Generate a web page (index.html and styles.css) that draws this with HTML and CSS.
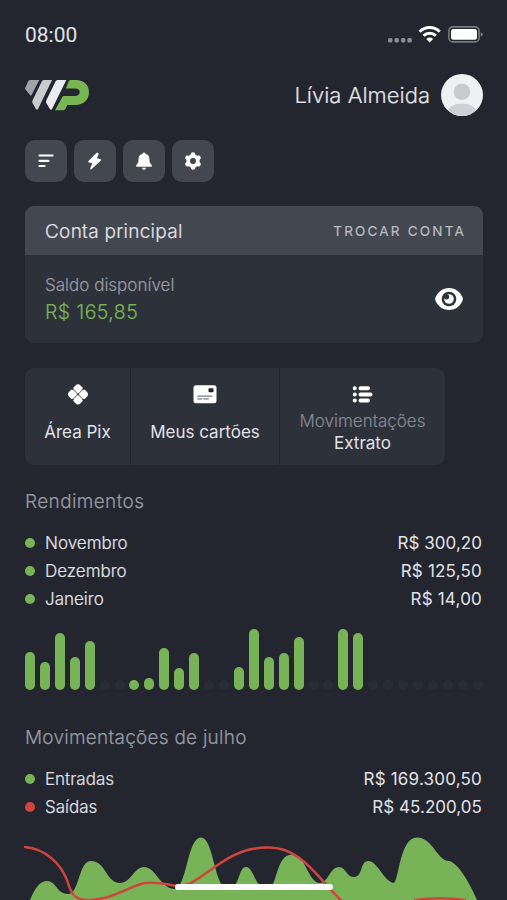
FILE: index.html
```
<!DOCTYPE html>
<html lang="pt-BR">
<head>
<meta charset="utf-8">
<title>Conta principal</title>
<link rel="stylesheet" href="styles.css">
</head>
<body>
<div class="screen">
  <div class="status">
    <span class="time">08:00</span>
    <svg class="status-icons" width="96" height="20" viewBox="0 0 96 20">
      <g fill="#8b8d94"><rect x="1" y="14" width="4.400" height="4.400" rx="1.500"/><rect x="7.500" y="14" width="4.400" height="4.400" rx="1.500"/><rect x="14" y="14" width="4.400" height="4.400" rx="1.500"/><rect x="20.400" y="14" width="4.400" height="4.400" rx="1.500"/></g>
      <g fill="none" stroke="#fff" stroke-width="3"><path d="M32.700 7.800a14 14 0 0 1 20 0"/><path d="M36.500 11.800a8.700 8.700 0 0 1 12.400 0"/></g>
      <path d="M39.300 14.900a4.800 4.800 0 0 1 6.800 0l-3.400 3.500z" fill="#fff"/>
      <rect x="61.900" y="2.900" width="30.200" height="15" rx="4" fill="none" stroke="#777980" stroke-width="1.600"/>
      <rect x="64" y="5" width="26" height="10.800" rx="2.300" fill="#fff"/>
      <path d="M93.700 8.200q2.200.7 2.200 2.200t-2.200 2.200z" fill="#777980"/>
    </svg>
  </div>

  <header class="header">
    <svg width="64" height="31" viewBox="0 0 65 31" preserveAspectRatio="none">
      <path d="M5 0h9.500L7 14.500Q6 16.500 5 15L.5 9.500Q-.2 8.600.3 7.500L3.500 1Q4 0 5 0z" fill="#a0a3a9"/>
      <path d="M19 0h8.500L13.500 28.500Q12.200 31 10.800 28.500L7.500 22.800Q7 21.700 7.600 20.500L17 1.500Q17.700 0 19 0z" fill="#c9ccce"/>
      <path d="M33 0h9L27.700 28.500Q26.400 31 25 28.500L21.500 22.800Q21 21.700 21.600 20.500L31 1.500Q31.700 0 33 0z" fill="#ebecf1"/>
      <path d="M46 0h6c8 0 13 5 13 12 0 8-6 13-13.500 13H43l-2 4Q40.300 30.300 39 30.300h-8.500l8-14.300H51c3.200 0 4.600-1.600 4.600-3.900S54 8.400 51 8.400H41.500L44.300 1.500Q45 0 46 0z" fill="#78b653"/>
    </svg>
    <div class="user">
      <span class="name">Lívia Almeida</span>
      <svg width="42" height="42" viewBox="0 0 42 42">
        <clipPath id="face"><circle cx="21" cy="21" r="21"/></clipPath>
        <g clip-path="url(#face)"><rect width="42" height="42" fill="#eef0f1"/><circle cx="21" cy="17.700" r="8.300" fill="#c7cbcd"/><ellipse cx="21" cy="40" rx="15" ry="10.500" fill="#cdd1d3"/></g>
      </svg>
    </div>
  </header>

  <nav class="tools">
    <button><svg width="18" height="18" viewBox="0 0 18 18"><path d="M2.500 3.500h13M2.500 8.800h9M2.500 14h5" fill="none" stroke="#fff" stroke-width="2.200" stroke-linecap="round"/></svg></button>
    <button><svg width="18" height="18" viewBox="0 0 18 18"><path d="M10.700.8L2.500 8.900Q1.600 10 3 10.500l3.300.8-2 4.900Q4 18 5.400 17.200l9.300-8.500Q15.600 7.600 14.200 7l-3.300-.8 1.700-4Q13 .2 10.700.8z" fill="#fff"/></svg></button>
    <button><svg width="18" height="18" viewBox="0 0 18 18"><path d="M9 .5Q10.200.5 10.500 1.700C13.700 2.600 14.500 5 14.500 8c0 2.500.9 3.700 2.200 5 .6.800.2 1.700-.8 1.700H2.100c-1 0-1.400-.9-.8-1.700C2.600 11.700 3.500 10.500 3.500 8c0-3 .8-5.400 4-6.300Q7.800.5 9 .5zM6.900 15.700h4.200Q10.800 17.800 9 17.800T6.900 15.700z" fill="#fff"/></svg></button>
    <button><svg width="18" height="18" viewBox="0 0 18 18"><circle cx="9" cy="9" r="4.700" fill="none" stroke="#fff" stroke-width="4"/><g stroke="#fff" stroke-width="4.600" stroke-linecap="round"><path d="M9 2.600v.8M9 14.600v.8M3.500 5.800l.7.400M13.800 11.800l.7.400M3.500 12.200l.7-.4M13.800 6.200l.7-.4"/></g><circle cx="9" cy="9" r="2.900" fill="#434750"/></svg></button>
  </nav>

  <section class="account">
    <div class="account-head"><span class="account-title">Conta principal</span><span class="switch">TROCAR CONTA</span></div>
    <div class="account-body">
      <div><div class="label">Saldo disponível</div><div class="balance">R$ 165,85</div></div>
      <svg width="28" height="22" viewBox="0 0 28 22"><path d="M14 0C20.500 0 25 4 27.500 9.300q.6 1.700 0 3.400C25 18 20.500 22 14 22S3 18 .5 12.700q-.6-1.700 0-3.400C3 4 7.500 0 14 0z" fill="#fff"/><circle cx="14" cy="11" r="7.300" fill="#2d313a"/><circle cx="14" cy="11" r="4.800" fill="#fff"/><circle cx="11.600" cy="8.800" r="2.600" fill="#2d313a"/></svg>
    </div>
  </section>

  <section class="shortcuts">
    <div class="shortcut pix">
      <svg width="22" height="22" viewBox="0 0 22 22"><g transform="rotate(45 11 10.300)"><rect x="3" y="2.300" width="16" height="16" rx="3.500" fill="#fff"/><path d="M11 2.300v16M3 10.300h16" stroke="#2d313a" stroke-width=".8"/><g fill="#2d313a"><circle cx="11" cy="2.300" r="1.200"/><circle cx="11" cy="18.300" r="1.200"/><circle cx="3" cy="10.300" r="1.200"/><circle cx="19" cy="10.300" r="1.200"/><circle cx="11" cy="10.300" r=".9"/></g></g></svg>
      <span class="bright">Área Pix</span>
    </div>
    <div class="shortcut cards">
      <svg width="24" height="22" viewBox="0 0 24 22"><rect x=".5" y="1.300" width="23" height="18" rx="2.500" fill="#fff"/><rect x="15.500" y="4.300" width="5" height="4" rx=".8" fill="#20232c"/><path d="M4.300 12.100h15M4.300 14.800h5M10.300 14.800h5.500" stroke="#777a80" stroke-width="1.300"/></svg>
      <span class="bright">Meus cartões</span>
    </div>
    <div class="shortcut extract">
      <svg width="22" height="22" viewBox="0 0 22 22"><g stroke="#fff" stroke-width="4" stroke-linecap="round"><path d="M2.700 4.200h.1M2.700 10.400h.1M2.700 16.600h.1M8.500 4.200h7.500M8.500 10.400h10M8.500 16.600h7.500"/></g></svg>
      <span class="muted">Movimentações</span>
      <span class="bright second">Extrato</span>
    </div>
  </section>

  <section class="income">
    <h2 class="h-income">Rendimentos</h2>
    <ul>
      <li><i></i><span class="item">Novembro</span><b class="wide">R$ 300,20</b></li>
      <li><i></i><span class="item">Dezembro</span><b>R$ 125,50</b></li>
      <li><i></i><span class="item">Janeiro</span><b>R$ 14,00</b></li>
    </ul>
    <div class="bars">
      <span style="height:38.5px"></span><span style="height:28.5px"></span><span style="height:57px"></span><span style="height:33.5px"></span><span style="height:49.5px"></span><span class="off"></span><span class="off"></span><span style="height:10px"></span><span style="height:12.5px"></span><span style="height:42px"></span><span style="height:22px"></span><span style="height:37px"></span><span class="off"></span><span class="off"></span><span style="height:23.5px"></span><span style="height:61.5px"></span><span style="height:33.5px"></span><span style="height:37px"></span><span style="height:53px"></span><span class="off"></span><span class="off"></span><span style="height:61.5px"></span><span style="height:57px"></span><span class="off"></span><span class="off"></span><span class="off"></span><span class="off"></span><span class="off"></span><span class="off"></span><span class="off"></span><span class="off"></span>
    </div>
  </section>

  <section class="flow">
    <h2 class="h-flow">Movimentações de julho</h2>
    <ul>
      <li><i></i><span class="item">Entradas</span><b>R$ 169.300,50</b></li>
      <li><i class="red"></i><span class="item">Saídas</span><b class="wide">R$ 45.200,05</b></li>
    </ul>
    <svg class="chart" width="460" height="65" viewBox="24 835 460 65">
      <path fill="#78b457" d="M30 900C35 888 40 881 47 881C56 881 57 894 68 894C80 894 78 861 91 861C106 861 106 883 120 883C131 883 134 867 144 867C156 867 160 888 174 889C187 889 187 837.500 201 837.500C214 837.500 214 889 228 889C240 889 238 867 246 867C254 867 255 889 267 889C278 889 275 854.500 292 854.500C306 854.500 308 883 320 883C328 883 330 867 339 867C346 867 346 877 354 877C363 877 360 861 368 861C378 861 383 881 394 883C399 879 400 837.500 417 837.500C433 837.500 437 861 449 861C459 863 471 886 477 900z"/>
      <path fill="none" stroke="#d0443f" stroke-width="2.500" stroke-linecap="round" d="M25 847C47 849 61 865 67 880C71 893 73 900 89 900C113 900 133 884 146 883C160 882 165 884 176 886C202 888 221 847 268 847.500C302 847 317 878 341 900M415 900Q440 896.500 465 900"/>
    </svg>
  </section>
  <div class="home-indicator"></div>
</div>
</body>
</html>
```
FILE: styles.css
```
* { box-sizing: border-box; }
body { margin: 0; background: #23262f; color: #e1e2e7; font-family: Inter, "Liberation Sans", sans-serif; font-weight: 300; }
svg { display: block; flex: none; }
h2, ul { margin: 0; padding: 0; }
.name, .account-title, .label, .balance, .muted, h2, .item { -webkit-text-stroke: .2px currentColor; }
.screen { position: relative; width: 507px; height: 900px; padding: 0 24px 0 25px; overflow: hidden; }
.status { display: flex; justify-content: space-between; align-items: center; height: 70px; }
.time { font: 400 21px/26px Roboto, sans-serif; }
.status-icons { margin-top: -2px; }
.header { display: flex; align-items: center; justify-content: space-between; height: 50px; }
.user { display: flex; align-items: center; gap: 11px; }
.name { font-size: 22px; }
.tools { display: flex; gap: 7px; margin-top: 20px; }
.tools button { display: flex; align-items: center; justify-content: center; width: 42px; height: 42px; padding: 0; border: 0; border-radius: 10px; background: #434750; }
.account { margin-top: 24px; height: 137px; border-radius: 9px; background: #2d313a; overflow: hidden; }
.account-head { display: flex; align-items: center; justify-content: space-between; height: 49px; padding: 0 17px 0 20px; background: #434750; }
.account-title { font-size: 19px; letter-spacing: .28px; padding-top: 1px; }
.switch { font-size: 13.5px; font-weight: 400; letter-spacing: 2.2px; color: #babcc3; padding-top: 1px; -webkit-text-stroke: .2px currentColor; }
.account-body { display: flex; align-items: center; justify-content: space-between; height: 88px; padding: 0 20px; }
.label { font-size: 17px; line-height: 26px; color: #979aa1; }
.balance { font-size: 19.5px; line-height: 28px; color: #78b457; letter-spacing: .45px; }
.shortcuts { display: flex; width: 420px; height: 97px; margin-top: 25px; border-radius: 9px; background: #2d313a; overflow: hidden; }
.shortcut { display: flex; flex-direction: column; align-items: center; padding-top: 16px; border-right: 1px solid #23262f; }
.pix { width: 106px; }
.cards { width: 149px; }
.extract { width: 165px; border: 0; }
.bright { font-size: 17px; line-height: 22px; font-weight: 400; margin-top: 15px; white-space: nowrap; }
.muted { font-size: 17px; line-height: 22px; color: #858891; margin-top: 4px; }
.second { margin-top: 0; }
h2 { font-size: 19px; line-height: 26px; font-weight: 300; color: #979aa1; letter-spacing: .38px; }
.h-flow { letter-spacing: .24px; }
.income { margin-top: 24px; }
ul { list-style: none; margin-top: 14px; }
li { display: flex; align-items: center; height: 28px; }
i { width: 10px; height: 10px; margin-right: 10px; border-radius: 50%; background: #78b457; }
.red { background: #d0443f; }
.item { font-size: 17px; }
b { margin-left: auto; font-size: 17px; font-weight: 400; letter-spacing: .2px; padding-right: 1px; }
.wide { letter-spacing: .03px; }
.bars { display: flex; align-items: flex-end; justify-content: space-between; height: 62px; margin-top: 15px; }
.bars span { width: 10px; border-radius: 5px; background: #78b457; }
.bars .off { height: 10px; background: #272d36; }
.flow { margin-top: 35px; }
.chart { margin: 14px 0 0 -1px; }
.home-indicator { position: absolute; left: 175px; top: 884px; width: 158px; height: 6px; border-radius: 3px; background: #fff; }
```
